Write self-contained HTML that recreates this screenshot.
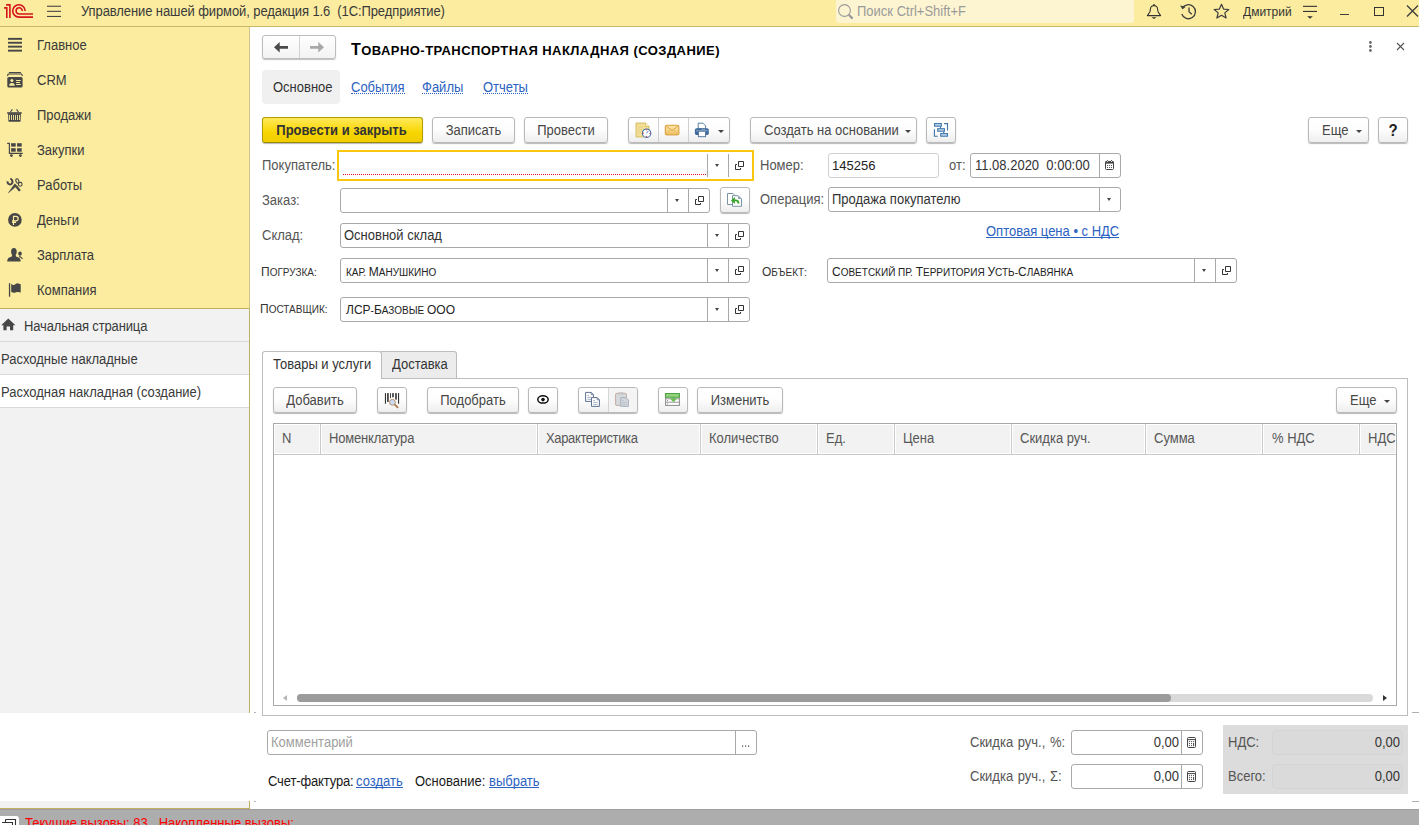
<!DOCTYPE html>
<html><head><meta charset="utf-8">
<style>
*{box-sizing:border-box;margin:0;padding:0}
html,body{width:1419px;height:825px;overflow:hidden;background:#fff;font-family:"Liberation Sans",sans-serif;font-size:13px;color:#333}
.a{position:absolute}
.t{position:absolute;white-space:nowrap;line-height:15px;transform:scaleY(1.1);transform-origin:0 0}
#top{left:0;top:0;width:1419px;height:27px;background:#fbec9f;border-bottom:1px solid #c6b666}
#side{left:0;top:27px;width:250px;height:782px;background:#f2f2f2;border-right:1px solid #d3c68e}
#sec{left:0;top:0;width:249px;height:282px;background:#fbec9f;border-bottom:1px solid #d2c080}
.si{position:absolute;left:37px;color:#3a3a3a}
.ico{position:absolute}
.ns{position:absolute;left:0;width:249px;height:33px;border-bottom:1px solid #d8d8d8}
.bt{display:inline-block;position:relative;top:-1px;transform:scaleY(1.1);transform-origin:0 0}
.btn{position:absolute;height:26px;border:1px solid #b9b9b9;border-radius:3px;background:linear-gradient(#fff 0%,#fdfdfd 50%,#eeeeee 100%);box-shadow:0 1px 1px rgba(0,0,0,.28);color:#474747;text-align:center;line-height:23px;white-space:nowrap}
.fld{position:absolute;height:25px;border:1px solid #a9a9a9;border-radius:3px;background:#fff}
.dv{position:absolute;top:0;bottom:0;width:1px;background:#a9a9a9}
.lbl{position:absolute;white-space:nowrap;color:#555;line-height:15px;transform:scaleY(1.1);transform-origin:0 0}
.ft{position:absolute;white-space:nowrap;color:#333;line-height:15px;transform:scaleY(1.1);transform-origin:0 0}
.arr{position:absolute;width:0;height:0;border-left:2.5px solid transparent;border-right:2.5px solid transparent;border-top:3px solid #444}
.barr{position:absolute;width:0;height:0;border-left:3px solid transparent;border-right:3px solid transparent;border-top:3px solid #444}
.lnk{color:#2c62c1}
.ul{position:absolute;height:1px;background:#2c62c1}
.th{position:absolute;top:0;height:30px;border-right:1px solid #d6d6d6;box-shadow:inset 1px 0 0 #fff}
.tht{position:absolute;top:7px;white-space:nowrap;color:#4d4d4d;line-height:15px}
.sc{transform:none}
</style></head><body>

<!-- TOP BAR -->
<div id="top" class="a">
  <svg class="a" style="left:0;top:0" width="40" height="22" viewBox="0 0 40 22">
    <g fill="none" stroke="#d7141c" stroke-width="1.6">
      <path d="M4.1 7.85 H6.8 V17.9"/>
      <path d="M6.1 4.85 H9.9 V17.9"/>
      <path d="M25.1 10.9 A6.2 6.2 0 1 0 19.1 17.1 H33"/>
      <path d="M22.3 10.9 A3.1 3.1 0 1 0 19.2 14 H33"/>
    </g>
  </svg>
  <svg class="a" style="left:47px;top:5px" width="15" height="13" viewBox="0 0 15 13">
    <g fill="#464646"><rect x="0" y="0.7" width="14" height="1.1"/><rect x="0" y="5.8" width="14" height="1.1"/><rect x="0" y="10.9" width="14" height="1.1"/></g>
  </svg>
  <div class="t" style="left:81px;top:3px;color:#3a3a3a;letter-spacing:-0.095px">Управление нашей фирмой, редакция 1.6&nbsp; (1С:Предприятие)</div>
  <div class="a" style="left:836px;top:0;width:298px;height:23px;background:#fdf5d2;border-radius:0 0 3px 3px"></div>
  <svg class="a" style="left:838px;top:4px" width="17" height="17" viewBox="0 0 17 17">
    <circle cx="6.5" cy="6.5" r="5.9" fill="none" stroke="#999" stroke-width="1.1"/>
    <path d="M10.8 10.8 L14.6 14.6" stroke="#999" stroke-width="2.2"/>
  </svg>
  <div class="t" style="left:857px;top:3px;color:#9a9a9a">Поиск Ctrl+Shift+F</div>
  <!-- bell -->
  <svg class="a" style="left:1146px;top:3px" width="16" height="17" viewBox="0 0 16 17">
    <circle cx="8" cy="1.8" r="0.9" fill="#333"/>
    <path d="M1.4 12.6 L3.8 9 C4.4 7.5 4.3 5 5 4 C5.6 3 6.6 2.6 8 2.6 C9.4 2.6 10.4 3 11 4 C11.7 5 11.6 7.5 12.2 9 L14.6 12.6 Z" fill="none" stroke="#333" stroke-width="1.1" stroke-linejoin="round"/>
    <path d="M5.5 14.2 H10.5 L8 15.9 Z" fill="#333"/>
  </svg>
  <!-- history -->
  <svg class="a" style="left:1179px;top:3px" width="18" height="17" viewBox="0 0 18 17">
    <path d="M3.2 5.5 A7 7 0 1 1 2.8 11" fill="none" stroke="#3d3d3d" stroke-width="1.3"/>
    <path d="M1 2.5 L3.6 6.2 L6.8 3.8 Z" fill="#3d3d3d"/>
    <path d="M10 4.5 V8.8 L12.8 11.2" fill="none" stroke="#3d3d3d" stroke-width="1.3"/>
  </svg>
  <!-- star -->
  <svg class="a" style="left:1213px;top:3px" width="17" height="17" viewBox="0 0 17 17">
    <path d="M8.5 1.3 L10.6 6.1 L15.8 6.5 L11.8 9.9 L13.1 15 L8.5 12.3 L3.9 15 L5.2 9.9 L1.2 6.5 L6.4 6.1 Z" fill="none" stroke="#3d3d3d" stroke-width="1.2" stroke-linejoin="round"/>
  </svg>
  <div class="t" style="left:1243px;top:4px;color:#333;font-size:12px">Дмитрий</div>
  <!-- filter -->
  <svg class="a" style="left:1302px;top:4px" width="16" height="16" viewBox="0 0 16 16">
    <g fill="#333"><rect x="1" y="1.8" width="14" height="1.1"/><rect x="1" y="6.9" width="14" height="1.1"/><path d="M5.2 12.2 H10.8 L8 14.8 Z"/></g>
  </svg>
  <div class="a" style="left:1340px;top:14px;width:9px;height:1.3px;background:#3d3d3d"></div>
  <div class="a" style="left:1374px;top:7px;width:10px;height:9px;border:1.2px solid #333"></div>
  <svg class="a" style="left:1406px;top:5px" width="13" height="12" viewBox="0 0 13 12">
    <path d="M1 0.5 L12 11.5 M12 0.5 L1 11.5" stroke="#3d3d3d" stroke-width="1.3"/>
  </svg>
</div>

<!-- SIDEBAR -->
<div class="a" style="left:0;top:27px;width:250px;height:782px;background:#f2f2f2;border-right:1px solid #bfb062"></div>
<div class="a" style="left:0;top:27px;width:250px;height:282px;background:#fbec9f;border-bottom:1px solid #bfae5e;border-right:1px solid #d0c389"></div>
<svg class="a" style="left:0;top:0" width="30" height="310" viewBox="0 0 30 310">
 <g fill="#464646">
  <rect x="8" y="37.9" width="14" height="1.9"/><rect x="8" y="41.8" width="14" height="1.9"/><rect x="8" y="45.7" width="14" height="1.9"/><rect x="8" y="49.7" width="14" height="1.9"/>
 </g>
 <g>
  <rect x="8.9" y="72" width="12" height="1.1" fill="#464646"/>
  <path d="M7.4 76 L8.2 74 H21.6 L22.4 76" fill="none" stroke="#464646" stroke-width="1.1"/>
  <rect x="7.3" y="77" width="15.3" height="10.6" rx="1.6" fill="#464646"/>
  <circle cx="11.9" cy="80.4" r="1.5" fill="#fbec9f"/>
  <path d="M9.1 85.8 C9.3 83.6 10.3 83 11.9 83 C13.5 83 14.6 83.6 14.8 85.8 Z" fill="#fbec9f"/>
  <rect x="16.1" y="80" width="4.6" height="1" fill="#fbec9f"/><rect x="16.1" y="82" width="3.8" height="1" fill="#fbec9f"/><rect x="16.1" y="84" width="4.6" height="1" fill="#fbec9f"/>
 </g>
 <g>
  <path d="M10.4 112 L12.4 109.3 M18.5 112 L16.5 109.3" stroke="#464646" stroke-width="1.1"/>
  <rect x="7.2" y="112.2" width="14.5" height="1.6" fill="#464646"/>
  <path d="M8.1 113.5 H20.9 L20.6 121 Q20.5 121.8 19.8 121.8 H9.2 Q8.5 121.8 8.4 121 Z" fill="#464646"/>
  <g fill="#fbec9f"><rect x="9.1" y="114.9" width="0.9" height="5.1"/><rect x="11.1" y="114.9" width="0.9" height="5.1"/><rect x="13" y="114.9" width="0.9" height="5.1"/><rect x="15" y="114.9" width="0.9" height="5.1"/><rect x="17" y="114.9" width="0.9" height="5.1"/><rect x="19" y="114.9" width="0.9" height="5.1"/></g>
 </g>
 <g>
  <path d="M7.2 143.4 H9.4 V153.3 H22.8" fill="none" stroke="#464646" stroke-width="1.2"/>
  <g fill="#464646"><rect x="11.1" y="143.2" width="4.6" height="3.4"/><rect x="17.1" y="143.2" width="4.6" height="3.4"/><rect x="11.1" y="148.2" width="4.6" height="3.5"/><rect x="17.1" y="148.2" width="4.6" height="3.5"/>
  <circle cx="11.4" cy="155.6" r="1.4"/><circle cx="20.4" cy="155.6" r="1.4"/></g>
 </g>
 <g fill="none" stroke="#464646">
  <path d="M10.3 178.6 C12.8 179.4 13.2 182.6 11.4 184 C9.6 185.2 7.7 183.8 7.3 181.3" stroke-width="2"/>
  <path d="M16.2 186.2 L19.9 190.9" stroke-width="2.3"/>
  <ellipse cx="17.4" cy="181" rx="1.4" ry="2.3" transform="rotate(-20 17.4 181)" stroke-width="1.1"/>
  <circle cx="20.2" cy="184.3" r="1.9" stroke-width="1.1"/>
  <path d="M14.8 183.8 L16.8 185.8 L8.4 192.8 Z" fill="#464646" stroke-width="0.5"/>
 </g>
 <g>
  <circle cx="14.9" cy="219.9" r="6.8" fill="#464646"/>
  <path d="M13.5 225 V216.4 H15.8 Q18.2 216.4 18.2 218.6 Q18.2 220.8 15.8 220.8 H12 M12 222.4 H16" fill="none" stroke="#fbec9f" stroke-width="1.2"/>
 </g>
 <g fill="#464646">
  <ellipse cx="13.9" cy="251.8" rx="2.8" ry="3.7"/>
  <path d="M12.3 254.5 H15.5 L16 256.6 C19 257.3 20.7 258.5 20.7 261.6 H7.2 C7.2 258.5 8.9 257.3 11.8 256.6 Z"/>
  <ellipse cx="20" cy="253.6" rx="1.8" ry="2.2"/>
  <path d="M19.2 255.5 L20.4 256.2 L22.8 258.3 L22.5 259.2 L19.2 257 Z"/>
 </g>
 <g fill="#464646">
  <rect x="8.9" y="283.2" width="1.3" height="13.5"/>
  <path d="M11.2 283.8 Q12.8 285.3 14.3 284.9 Q16.2 283 18.2 283.4 L20.7 284.3 V292.5 Q18.9 291.6 17 292 Q14.8 293.2 12.8 292.6 L11.2 292 Z"/>
 </g>
</svg>
<div class="si t" style="top:37px">Главное</div>
<div class="si t" style="top:72px">CRM</div>
<div class="si t" style="top:107px">Продажи</div>
<div class="si t" style="top:142px">Закупки</div>
<div class="si t" style="top:177px">Работы</div>
<div class="si t" style="top:212px">Деньги</div>
<div class="si t" style="top:247px">Зарплата</div>
<div class="si t" style="top:282px">Компания</div>
<!-- open windows panel -->
<div class="a" style="left:0;top:341px;width:249px;height:1px;background:#d9d9d9"></div>
<div class="a" style="left:0;top:375px;width:249px;height:32px;background:#fff"></div>
<div class="a" style="left:0;top:374px;width:249px;height:1px;background:#d9d9d9"></div>
<div class="a" style="left:0;top:407px;width:249px;height:1px;background:#d9d9d9"></div>
<svg class="a" style="left:1px;top:318px" width="15" height="13" viewBox="0 0 15 13">
  <path d="M7.3 0.6 L14.4 7.2 H12.2 V12.3 H9 V8.6 H5.6 V12.3 H2.4 V7.2 H0.2 Z" fill="#464646"/>
</svg>
<div class="t" style="left:24px;top:318px;color:#3a3a3a;letter-spacing:-0.14px">Начальная страница</div>
<div class="t" style="left:1px;top:351px;color:#3a3a3a">Расходные накладные</div>
<div class="t" style="left:1px;top:384px;color:#3a3a3a">Расходная накладная (создание)</div>

<!-- white footer band over sidebar -->
<div class="a" style="left:0;top:713px;width:1419px;height:88px;background:#fff"></div>
<div class="a" style="left:254px;top:712px;width:2px;height:1px;background:#b4b4c0"></div>
<div class="a" style="left:254px;top:801px;width:2px;height:1px;background:#b4b4c0"></div>
<div class="a" style="left:1412px;top:712px;width:7px;height:1px;background:#b0b0b0"></div>
<div class="a" style="left:1412px;top:801px;width:7px;height:1px;background:#b0b0b0"></div>

<!-- STATUS BAR -->
<div class="a" style="left:0;top:808px;width:250px;height:1px;background:#bfae5e"></div>
<div class="a" style="left:0;top:809px;width:1419px;height:16px;background:#adadad;border-top:1px solid #9e9e9e"></div>
<div class="a" style="left:0;top:816px;width:19px;height:12px;background:#fff;border-radius:0 3px 0 0"></div>
<svg class="a" style="left:1px;top:819px" width="16" height="6" viewBox="0 0 16 6"><path d="M4.5 0.5 H14.5 V6 M1 3.5 H11.5 V6 M4.5 0.5 V3.5" fill="none" stroke="#333" stroke-width="1.1"/></svg>
<div class="t" style="left:25px;top:815px;color:#ff0000">Текущие вызовы: 83&nbsp;&nbsp; Накопленные вызовы:</div>
<!-- MAIN HEADER -->
<div class="a" style="left:262px;top:35px;width:74px;height:24px;border:1px solid #bdbdbd;border-radius:3px;background:linear-gradient(#fff,#f3f3f3);box-shadow:0 1px 1px rgba(0,0,0,.25)"></div>
<div class="a" style="left:299px;top:36px;width:1px;height:22px;background:#d2d2d2"></div>
<svg class="a" style="left:274px;top:42px" width="14" height="11" viewBox="0 0 14 11"><path d="M0 5.3 L5.7 0 V3.9 H14 V6.8 H5.7 V10.6 Z" fill="#4a4a4a"/></svg>
<svg class="a" style="left:310px;top:42px" width="14" height="11" viewBox="0 0 14 11"><path d="M14 5.3 L8.3 0 V3.9 H0 V6.8 H8.3 V10.6 Z" fill="#a8a8a8"/></svg>
<div class="t" style="left:351px;top:41px;transform:none;font-weight:bold;color:#000;line-height:18px;letter-spacing:0.45px"><span style="font-size:16px">Т</span><span style="font-size:13px">ОВАРНО-ТРАНСПОРТНАЯ НАКЛАДНАЯ (СОЗДАНИЕ)</span></div>
<svg class="a" style="left:1367px;top:41px" width="6" height="13" viewBox="0 0 6 13"><g fill="#6a6a6a"><circle cx="3.4" cy="1.5" r="1.4"/><circle cx="3.4" cy="5.5" r="1.4"/><circle cx="3.4" cy="9.5" r="1.4"/></g></svg>
<svg class="a" style="left:1396px;top:42px" width="9" height="9" viewBox="0 0 9 9"><path d="M1 1 L8 8 M8 1 L1 8" stroke="#555" stroke-width="1.1"/></svg>

<div class="a" style="left:262px;top:70px;width:78px;height:34px;background:#f0f0f0;border-radius:4px"></div>
<div class="t" style="left:273px;top:79px;color:#333">Основное</div>
<div class="t lnk" style="left:351px;top:80px;border-bottom:1px dotted #2c62c1;line-height:13px;transform:none"><span style="display:inline-block;transform:scaleY(1.1);transform-origin:0 0">События</span></div>
<div class="t lnk" style="left:422px;top:80px;border-bottom:1px dotted #2c62c1;line-height:13px;transform:none"><span style="display:inline-block;transform:scaleY(1.1);transform-origin:0 0">Файлы</span></div>
<div class="t lnk" style="left:483px;top:80px;border-bottom:1px dotted #2c62c1;line-height:13px;transform:none"><span style="display:inline-block;transform:scaleY(1.1);transform-origin:0 0">Отчеты</span></div>

<!-- TOOLBAR -->
<div class="btn" style="left:262px;top:117px;width:161px;padding-right:2px;border-color:#b39c00 #b39c00 #9c8800;background:linear-gradient(#ffe95a,#f7d600 60%,#f0cd00);font-weight:bold;color:#333"><span class="bt">Провести и закрыть</span></div>
<div class="btn" style="left:432px;top:117px;width:83px"><span class="bt">Записать</span></div>
<div class="btn" style="left:524px;top:117px;width:84px"><span class="bt">Провести</span></div>
<div class="btn" style="left:628px;top:117px;width:102px"></div>
<div class="a" style="left:658px;top:118px;width:1px;height:24px;background:#cfcfcf"></div>
<div class="a" style="left:688px;top:118px;width:1px;height:24px;background:#cfcfcf"></div>
<svg class="a" style="left:630px;top:118px" width="80" height="24" viewBox="0 0 80 24">
  <defs><linearGradient id="env" x1="0" y1="0" x2="0" y2="1"><stop offset="0" stop-color="#fde8ac"/><stop offset="1" stop-color="#f0c060"/></linearGradient></defs>
  <path d="M6 5 H15.5 L19 8.5 V19 H6 Z" fill="#f2de96" stroke="#d2b95a" stroke-width="0.9"/>
  <path d="M15.5 5 V8.5 H19" fill="#fff6d0" stroke="#d2b95a" stroke-width="0.8"/>
  <path d="M8 9 H13 M8 11.5 H12 M8 14 H11" stroke="#e3cc7a" stroke-width="0.7"/>
  <circle cx="16.6" cy="15.2" r="4.2" fill="#fff" stroke="#3e6fb6" stroke-width="1.1"/>
  <g fill="#e02828"><circle cx="16.6" cy="11.8" r="0.6"/><circle cx="20" cy="15.2" r="0.6"/><circle cx="16.6" cy="18.6" r="0.6"/><circle cx="13.2" cy="15.2" r="0.6"/></g>
  <path d="M16.6 15.2 L18.4 12.9" stroke="#3e6fb6" stroke-width="0.9"/>
  <rect x="35.3" y="7.3" width="13.6" height="9.6" rx="1.2" fill="url(#env)" stroke="#d59a36" stroke-width="1"/>
  <path d="M35.8 7.8 L42.1 12.6 L48.4 7.8" fill="none" stroke="#d59a36" stroke-width="0.8"/>
  <path d="M35.8 16.4 L40.2 12.2 M48.4 16.4 L44 12.2" stroke="#e2b262" stroke-width="0.6"/>
  <path d="M68.2 5.2 H73 L75.6 7.8 V10.8 H68.2 Z" fill="#fff" stroke="#4b6f99" stroke-width="0.9"/>
  <rect x="64.9" y="10.3" width="13.9" height="6.6" rx="1.6" fill="#3d6a9a"/>
  <rect x="66.2" y="12.3" width="11.3" height="1" fill="#9bb8d6"/>
  <rect x="68.4" y="13.2" width="7.2" height="5.5" fill="#fff" stroke="#4b6f99" stroke-width="0.9"/>
  <circle cx="72.2" cy="11.3" r="0.5" fill="#fff"/><circle cx="74.1" cy="11.3" r="0.5" fill="#fff"/>
</svg>
<div class="barr" style="left:718px;top:130px"></div>
<div class="btn" style="left:750px;top:117px;width:167px;text-align:left;padding-left:13px"><span class="bt">Создать на основании</span></div>
<div class="barr" style="left:905px;top:130px"></div>
<div class="btn" style="left:926px;top:117px;width:30px"></div>
<svg class="a" style="left:928px;top:118px" width="26" height="24" viewBox="0 0 26 24">
  <g stroke="#3f77ad" stroke-width="1.1" fill="#c8dcef">
  <rect x="6.6" y="5.6" width="6.7" height="2.6"/><rect x="9.7" y="10.7" width="6.7" height="2.5"/><rect x="12.7" y="15.6" width="6.7" height="2.6"/>
  <path d="M12.5 8.7 V10.2 M15.7 13.7 V15.1 M16.1 5.6 H19.5 V12.6 M6.4 11.2 V18.3 H9.7" fill="none"/>
  </g>
</svg>
<div class="btn" style="left:1308px;top:117px;width:61px;text-align:left;padding-left:13px"><span class="bt">Еще</span></div>
<div class="barr" style="left:1356px;top:130px"></div>
<div class="btn" style="left:1378px;top:117px;width:30px;font-weight:bold;font-size:15px;color:#222"><span class="bt">?</span></div>

<!-- FIELDS -->
<div class="lbl" style="left:262px;top:157px">Покупатель:</div>
<div class="a" style="left:337px;top:150px;width:417px;height:31px;border:2px solid #f9c70e;background:#fff"></div>
<div class="a" style="left:343px;top:174px;width:364px;height:1px;background:repeating-linear-gradient(90deg,#e8141c 0 1px,transparent 1px 2px)"></div>
<div class="a" style="left:707px;top:154px;width:1px;height:23px;background:#a9a9a9"></div>
<div class="a" style="left:728px;top:154px;width:1px;height:23px;background:#a9a9a9"></div>
<div class="arr" style="left:715px;top:164px"></div>
<svg class="a ob" style="left:735px;top:161px" width="10" height="10" viewBox="0 0 10 10"><path d="M3.5 0.5 H8.5 V5.5 H3.5 Z M2 3.5 H0.5 V8.5 H5.5 V7" fill="none" stroke="#333" stroke-width="1"/></svg>

<div class="lbl" style="left:760px;top:157px">Номер:</div>
<div class="fld" style="left:828px;top:153px;width:111px;border-color:#d0d0d0"></div>
<div class="ft" style="left:832px;top:158px;transform:none;color:#222">145256</div>
<div class="lbl" style="left:949px;top:157px">от:</div>
<div class="fld" style="left:970px;top:153px;width:151px"></div>
<div class="a" style="left:1099px;top:154px;width:1px;height:23px;background:#a9a9a9"></div>
<div class="ft" style="left:975px;top:157px">11.08.2020&nbsp; 0:00:00</div>
<svg class="a" style="left:1105px;top:160px" width="9" height="10" viewBox="0 0 9 10"><rect x="0.5" y="1.5" width="8" height="8" rx="1" fill="none" stroke="#444"/><rect x="0.5" y="1.2" width="8" height="2.4" fill="#444"/><g fill="#fff"><rect x="2" y="1" width="1" height="1"/><rect x="6" y="1" width="1" height="1"/></g><g fill="#444"><circle cx="2.5" cy="0.6" r="0.6"/><circle cx="6.5" cy="0.6" r="0.6"/><circle cx="2.5" cy="5.5" r="0.6"/><circle cx="4.5" cy="5.5" r="0.6"/><circle cx="6.5" cy="5.5" r="0.6"/><circle cx="2.5" cy="7.5" r="0.6"/><circle cx="4.5" cy="7.5" r="0.6"/><circle cx="6.5" cy="7.5" r="0.6"/></g></svg>

<div class="lbl" style="left:262px;top:192px">Заказ:</div>
<div class="fld" style="left:340px;top:188px;width:370px"></div>
<div class="a" style="left:667px;top:189px;width:1px;height:23px;background:#a9a9a9"></div>
<div class="a" style="left:688px;top:189px;width:1px;height:23px;background:#a9a9a9"></div>
<div class="arr" style="left:675px;top:199px"></div>
<svg class="a" style="left:695px;top:196px" width="10" height="10" viewBox="0 0 10 10"><path d="M3.5 0.5 H8.5 V5.5 H3.5 Z M2 3.5 H0.5 V8.5 H5.5 V7" fill="none" stroke="#333" stroke-width="1"/></svg>
<div class="btn" style="left:720px;top:187px;width:30px"></div>
<svg class="a" style="left:720px;top:187px" width="30" height="26" viewBox="0 0 30 26">
  <path d="M7.5 6.5 H13 L15 8.5 V17.5 H7.5 Z" fill="#fff" stroke="#7b93a3" stroke-width="1"/>
  <path d="M12.5 8.7 H18.2 L21.5 12 V19.3 H12.5 Z" fill="#fff" stroke="#7b93a3" stroke-width="1"/>
  <path d="M18.2 8.7 V12 H21.5 Z" fill="#8ba0ae"/>
  <path d="M10.9 13.4 L14.9 9.9 V16.9 Z" fill="#3aa52a"/>
  <path d="M14 13.4 H15.6 Q18.5 13.4 18.5 16.4" fill="none" stroke="#3aa52a" stroke-width="1.9"/>
</svg>
<div class="lbl" style="left:760px;top:191px">Операция:</div>
<div class="fld" style="left:828px;top:187px;width:293px"></div>
<div class="a" style="left:1099px;top:188px;width:1px;height:23px;background:#a9a9a9"></div>
<div class="arr" style="left:1107px;top:198px"></div>
<div class="ft" style="left:832px;top:191px">Продажа покупателю</div>

<div class="lbl" style="left:262px;top:227px">Склад:</div>
<div class="fld" style="left:340px;top:223px;width:410px"></div>
<div class="a" style="left:707px;top:224px;width:1px;height:23px;background:#a9a9a9"></div>
<div class="a" style="left:728px;top:224px;width:1px;height:23px;background:#a9a9a9"></div>
<div class="arr" style="left:715px;top:234px"></div>
<svg class="a" style="left:735px;top:231px" width="10" height="10" viewBox="0 0 10 10"><path d="M3.5 0.5 H8.5 V5.5 H3.5 Z M2 3.5 H0.5 V8.5 H5.5 V7" fill="none" stroke="#333" stroke-width="1"/></svg>
<div class="ft" style="left:344px;top:227px">Основной склад</div>
<div class="t lnk" style="left:986px;top:223px">Оптовая цена • с НДС</div><div class="ul" style="left:986px;top:237px;width:133px"></div>

<div class="lbl sc" style="left:261px;top:264px;color:#333"><span style="font-size:12px">П</span><span style="font-size:10px">ОГРУЗКА:</span></div>
<div class="fld" style="left:340px;top:258px;width:410px"></div>
<div class="a" style="left:707px;top:259px;width:1px;height:23px;background:#a9a9a9"></div>
<div class="a" style="left:728px;top:259px;width:1px;height:23px;background:#a9a9a9"></div>
<div class="arr" style="left:715px;top:269px"></div>
<svg class="a" style="left:735px;top:266px" width="10" height="10" viewBox="0 0 10 10"><path d="M3.5 0.5 H8.5 V5.5 H3.5 Z M2 3.5 H0.5 V8.5 H5.5 V7" fill="none" stroke="#333" stroke-width="1"/></svg>
<div class="ft sc" style="left:346px;top:264px;color:#222"><span style="font-size:10px">КАР. </span><span style="font-size:12px">М</span><span style="font-size:10px">АНУШКИНО</span></div>
<div class="lbl sc" style="left:762px;top:264px;color:#333"><span style="font-size:12px">О</span><span style="font-size:10px">БЪЕКТ:</span></div>
<div class="fld" style="left:827px;top:258px;width:410px"></div>
<div class="a" style="left:1194px;top:259px;width:1px;height:23px;background:#a9a9a9"></div>
<div class="a" style="left:1215px;top:259px;width:1px;height:23px;background:#a9a9a9"></div>
<div class="arr" style="left:1202px;top:269px"></div>
<svg class="a" style="left:1222px;top:266px" width="10" height="10" viewBox="0 0 10 10"><path d="M3.5 0.5 H8.5 V5.5 H3.5 Z M2 3.5 H0.5 V8.5 H5.5 V7" fill="none" stroke="#333" stroke-width="1"/></svg>
<div class="ft sc" style="left:832px;top:264px;color:#222"><span style="font-size:12px">С</span><span style="font-size:10px">ОВЕТСКИЙ ПР. </span><span style="font-size:12px">Т</span><span style="font-size:10px">ЕРРИТОРИЯ </span><span style="font-size:12px">У</span><span style="font-size:10px">СТЬ-</span><span style="font-size:12px">С</span><span style="font-size:10px">ЛАВЯНКА</span></div>

<div class="lbl sc" style="left:260px;top:301px;color:#333"><span style="font-size:12px">П</span><span style="font-size:10px">ОСТАВЩИК:</span></div>
<div class="fld" style="left:340px;top:297px;width:410px"></div>
<div class="a" style="left:707px;top:298px;width:1px;height:23px;background:#a9a9a9"></div>
<div class="a" style="left:728px;top:298px;width:1px;height:23px;background:#a9a9a9"></div>
<div class="arr" style="left:715px;top:308px"></div>
<svg class="a" style="left:735px;top:305px" width="10" height="10" viewBox="0 0 10 10"><path d="M3.5 0.5 H8.5 V5.5 H3.5 Z M2 3.5 H0.5 V8.5 H5.5 V7" fill="none" stroke="#333" stroke-width="1"/></svg>
<div class="ft sc" style="left:346px;top:302px;color:#222"><span style="font-size:12px">ЛСР</span><span style="font-size:10px">-</span><span style="font-size:12px">Б</span><span style="font-size:10px">АЗОВЫЕ </span><span style="font-size:12px">ООО</span></div>

<!-- TABS -->
<div class="a" style="left:262px;top:378px;width:1146px;height:338px;border:1px solid #bdbdbd"></div>
<div class="a" style="left:381px;top:351px;width:76px;height:28px;background:#ececec;border:1px solid #bdbdbd;border-left:0;border-radius:0 3px 0 0"></div>
<div class="a" style="left:262px;top:351px;width:120px;height:28px;background:#fff;border:1px solid #bdbdbd;border-bottom:0;border-radius:3px 3px 0 0"></div>
<div class="t" style="left:273px;top:356px;color:#333">Товары и услуги</div>
<div class="t" style="left:392px;top:356px;color:#333">Доставка</div>

<div class="btn" style="left:273px;top:387px;width:84px"><span class="bt">Добавить</span></div>
<div class="btn" style="left:377px;top:387px;width:30px"></div>
<svg class="a" style="left:378px;top:388px" width="28" height="24" viewBox="0 0 28 24">
  <g fill="#333"><rect x="6.9" y="5.1" width="1.1" height="10.6"/><rect x="9.1" y="5.1" width="1.6" height="8.8"/><rect x="12" y="5.1" width="0.9" height="5"/><rect x="14.2" y="5.1" width="1.6" height="4.2"/><rect x="17.2" y="5.1" width="1.6" height="6.5"/><rect x="20" y="5.1" width="1.1" height="10.6"/></g>
  <path d="M16.8 16.6 L19.6 19.4" stroke="#b27a4e" stroke-width="1.8" stroke-linecap="round"/>
  <circle cx="14.4" cy="14.3" r="2.9" fill="#c9ddf7" stroke="#b88558" stroke-width="0.9"/>
</svg>
<div class="btn" style="left:427px;top:387px;width:92px"><span class="bt">Подобрать</span></div>
<div class="btn" style="left:528px;top:387px;width:30px"></div>
<svg class="a" style="left:528px;top:388px" width="30" height="24" viewBox="0 0 30 24">
  <ellipse cx="15" cy="11.4" rx="5.2" ry="3.7" fill="#fff" stroke="#111" stroke-width="1.5"/>
  <circle cx="15" cy="11.6" r="1.8" fill="#111"/>
</svg>
<div class="btn" style="left:578px;top:387px;width:60px"></div>
<div class="a" style="left:608px;top:388px;width:1px;height:24px;background:#d5d5d5"></div>
<div class="a" style="left:609px;top:388px;width:28px;height:24px;background:#f4f4f4;border-radius:0 2px 2px 0"></div>


<div class="btn" style="left:658px;top:387px;width:30px"></div>

<svg class="a" style="left:578px;top:388px" width="112" height="24" viewBox="0 0 112 24">
  <path d="M7.6 4.4 H13.2 L15.4 6.6 V13.4 H7.6 Z" fill="#fff" stroke="#5d7392" stroke-width="1"/>
  <path d="M13.2 4.4 V6.6 H15.4" fill="none" stroke="#5d7392" stroke-width="0.8"/>
  <path d="M9.3 7.3 H11 M9.3 9.3 H13.5 M9.3 11.3 H13.5" stroke="#8fa0b6" stroke-width="0.8"/>
  <path d="M13.5 9.6 H19.2 L21.4 11.8 V18.4 H13.5 Z" fill="#fff" stroke="#5d7392" stroke-width="1"/>
  <path d="M19.2 9.6 V11.8 H21.4" fill="none" stroke="#5d7392" stroke-width="0.8"/>
  <path d="M15.2 12.6 H17 M15.2 14.6 H19.6 M15.2 16.6 H19.6" stroke="#8fa0b6" stroke-width="0.8"/>
  <rect x="37.6" y="5.4" width="10.8" height="12" rx="0.8" fill="#d6dadc" stroke="#c3aaa2" stroke-width="1"/>
  <rect x="40.2" y="4.2" width="5.6" height="2.2" rx="0.6" fill="#c4c4c4"/>
  <path d="M42.7 9.6 H48 L50.4 12 V18.4 H42.7 Z" fill="#d2d6dc" stroke="#aab2be" stroke-width="1"/>
  <path d="M44.3 12.6 H46 M44.3 14.6 H48.6 M44.3 16.6 H48.6" stroke="#b4bcc8" stroke-width="0.8"/>
  <rect x="87.6" y="5.5" width="13.8" height="11.9" fill="#fff" stroke="#8a8a8a" stroke-width="1"/>
  <rect x="87.6" y="5.5" width="13.8" height="3.8" fill="#92d27a" stroke="#4ea446" stroke-width="1"/>
  <path d="M88 10.8 H101 M88 14.2 H101" stroke="#8a8a8a" stroke-width="0.9"/>
  <path d="M89.5 12 V12.8 M89.5 15.5 V16.3" stroke="#555" stroke-width="0.8"/>
  <path d="M95.5 9.3 V12" stroke="#4ea446" stroke-width="1.2"/>
  <path d="M91.8 10.6 H99.2 L95.5 14.2 Z" fill="#6cc054"/>
</svg>
<div class="btn" style="left:697px;top:387px;width:86px"><span class="bt">Изменить</span></div>
<div class="btn" style="left:1336px;top:387px;width:61px;text-align:left;padding-left:13px"><span class="bt">Еще</span></div>
<div class="barr" style="left:1384px;top:400px"></div>

<!-- TABLE -->
<div class="a" style="left:273px;top:423px;width:1124px;height:283px;border:1px solid #a9a9a9;background:#fff"></div>
<div class="a" style="left:274px;top:424px;width:1122px;height:31px;background:#fff;border-bottom:1px solid #c8c8c8"></div>
<div class="a" style="left:275px;top:425px;width:44px;height:28px;background:#f2f2f2"></div>
<div class="a" style="left:322px;top:425px;width:214px;height:28px;background:#f2f2f2"></div>
<div class="a" style="left:539px;top:425px;width:160px;height:28px;background:#f2f2f2"></div>
<div class="a" style="left:702px;top:425px;width:114px;height:28px;background:#f2f2f2"></div>
<div class="a" style="left:819px;top:425px;width:74px;height:28px;background:#f2f2f2"></div>
<div class="a" style="left:896px;top:425px;width:114px;height:28px;background:#f2f2f2"></div>
<div class="a" style="left:1013px;top:425px;width:131px;height:28px;background:#f2f2f2"></div>
<div class="a" style="left:1147px;top:425px;width:114px;height:28px;background:#f2f2f2"></div>
<div class="a" style="left:1264px;top:425px;width:94px;height:28px;background:#f2f2f2"></div>
<div class="a" style="left:1361px;top:425px;width:34px;height:28px;background:#f2f2f2"></div>
<div class="a" style="left:320px;top:424px;width:1px;height:30px;background:#cbcbcb"></div>
<div class="a" style="left:537px;top:424px;width:1px;height:30px;background:#cbcbcb"></div>
<div class="a" style="left:700px;top:424px;width:1px;height:30px;background:#cbcbcb"></div>
<div class="a" style="left:817px;top:424px;width:1px;height:30px;background:#cbcbcb"></div>
<div class="a" style="left:894px;top:424px;width:1px;height:30px;background:#cbcbcb"></div>
<div class="a" style="left:1011px;top:424px;width:1px;height:30px;background:#cbcbcb"></div>
<div class="a" style="left:1145px;top:424px;width:1px;height:30px;background:#cbcbcb"></div>
<div class="a" style="left:1262px;top:424px;width:1px;height:30px;background:#cbcbcb"></div>
<div class="a" style="left:1359px;top:424px;width:1px;height:30px;background:#cbcbcb"></div>
<div class="t" style="left:282px;top:430px;color:#575757">N</div>
<div class="t" style="left:329px;top:430px;color:#575757;letter-spacing:-0.17px">Номенклатура</div>
<div class="t" style="left:546px;top:430px;color:#575757;letter-spacing:-0.36px">Характеристика</div>
<div class="t" style="left:709px;top:430px;color:#575757">Количество</div>
<div class="t" style="left:826px;top:430px;color:#575757">Ед.</div>
<div class="t" style="left:903px;top:430px;color:#575757">Цена</div>
<div class="t" style="left:1020px;top:430px;color:#575757">Скидка руч.</div>
<div class="t" style="left:1154px;top:430px;color:#575757">Сумма</div>
<div class="t" style="left:1272px;top:430px;color:#575757">% НДС</div>
<div class="t" style="left:1368px;top:430px;color:#575757;width:28px;overflow:hidden">НДС</div>
<div class="a" style="left:297px;top:694px;width:1076px;height:8px;background:#d9d9d9;border-radius:4px"></div>
<div class="a" style="left:297px;top:694px;width:874px;height:8px;background:#9b9b9b;border-radius:4px"></div>
<div class="a" style="left:283px;top:695px;width:0;height:0;border-top:3px solid transparent;border-bottom:3px solid transparent;border-right:4px solid #b5b5b5"></div>
<div class="a" style="left:1383px;top:695px;width:0;height:0;border-top:3px solid transparent;border-bottom:3px solid transparent;border-left:4px solid #333"></div>

<!-- FOOTER -->
<div class="fld" style="left:267px;top:730px;width:490px"></div>
<div class="a" style="left:735px;top:731px;width:1px;height:23px;background:#a9a9a9"></div>
<div class="t" style="left:271px;top:734px;color:#a0a0a0">Комментарий</div>
<svg class="a" style="left:741px;top:745px" width="10" height="3" viewBox="0 0 10 3"><g fill="#444"><rect x="1" y="0.5" width="1.2" height="1.2"/><rect x="4" y="0.5" width="1.2" height="1.2"/><rect x="7" y="0.5" width="1.2" height="1.2"/></g></svg>
<div class="t" style="left:268px;top:773px;color:#1a1a1a;letter-spacing:-0.14px">Счет-фактура:</div>
<div class="t lnk" style="left:356px;top:773px">создать</div><div class="ul" style="left:356px;top:787px;width:47px"></div>
<div class="t" style="left:415px;top:773px;color:#1a1a1a">Основание:</div>
<div class="t lnk" style="left:489px;top:773px">выбрать</div><div class="ul" style="left:489px;top:787px;width:50px"></div>

<div class="lbl" style="left:970px;top:734px;word-spacing:1px">Скидка руч., %:</div>
<div class="fld" style="left:1071px;top:730px;width:132px"></div>
<div class="a" style="left:1181px;top:731px;width:1px;height:23px;background:#a9a9a9"></div>
<div class="ft" style="left:1100px;top:734px;width:79px;text-align:right">0,00</div>
<div class="lbl" style="left:970px;top:768px;word-spacing:1px">Скидка руч., Σ:</div>
<div class="fld" style="left:1071px;top:764px;width:132px"></div>
<div class="a" style="left:1181px;top:765px;width:1px;height:23px;background:#a9a9a9"></div>
<div class="ft" style="left:1100px;top:768px;width:79px;text-align:right">0,00</div>
<svg class="a" style="left:1187px;top:737px" width="9" height="11" viewBox="0 0 9 11"><rect x="0.5" y="0.5" width="8" height="10" rx="1" fill="none" stroke="#444"/><path d="M0.5 2.6 H8.5" stroke="#444"/><g fill="#444"><circle cx="2.5" cy="4.6" r="0.6"/><circle cx="4.5" cy="4.6" r="0.6"/><circle cx="6.6" cy="4.6" r="0.6"/><circle cx="2.5" cy="6.6" r="0.6"/><circle cx="4.5" cy="6.6" r="0.6"/><circle cx="2.5" cy="8.6" r="0.6"/><circle cx="4.5" cy="8.6" r="0.6"/><rect x="6.1" y="6" width="1" height="3.2"/></g></svg>
<svg class="a" style="left:1187px;top:771px" width="9" height="11" viewBox="0 0 9 11"><rect x="0.5" y="0.5" width="8" height="10" rx="1" fill="none" stroke="#444"/><path d="M0.5 2.6 H8.5" stroke="#444"/><g fill="#444"><circle cx="2.5" cy="4.6" r="0.6"/><circle cx="4.5" cy="4.6" r="0.6"/><circle cx="6.6" cy="4.6" r="0.6"/><circle cx="2.5" cy="6.6" r="0.6"/><circle cx="4.5" cy="6.6" r="0.6"/><circle cx="2.5" cy="8.6" r="0.6"/><circle cx="4.5" cy="8.6" r="0.6"/><rect x="6.1" y="6" width="1" height="3.2"/></g></svg>

<div class="a" style="left:1223px;top:725px;width:185px;height:69px;background:#dcdcdc"></div>
<div class="a" style="left:1272px;top:730px;width:131px;height:25px;border:1px solid #d4d4d4;border-radius:4px;background:#dadada"></div>
<div class="a" style="left:1272px;top:764px;width:131px;height:25px;border:1px solid #d4d4d4;border-radius:4px;background:#dadada"></div>
<div class="lbl" style="left:1228px;top:734px">НДС:</div>
<div class="lbl" style="left:1228px;top:768px">Всего:</div>
<div class="ft" style="left:1300px;top:734px;width:100px;text-align:right">0,00</div>
<div class="ft" style="left:1300px;top:768px;width:100px;text-align:right">0,00</div>
</body></html>
